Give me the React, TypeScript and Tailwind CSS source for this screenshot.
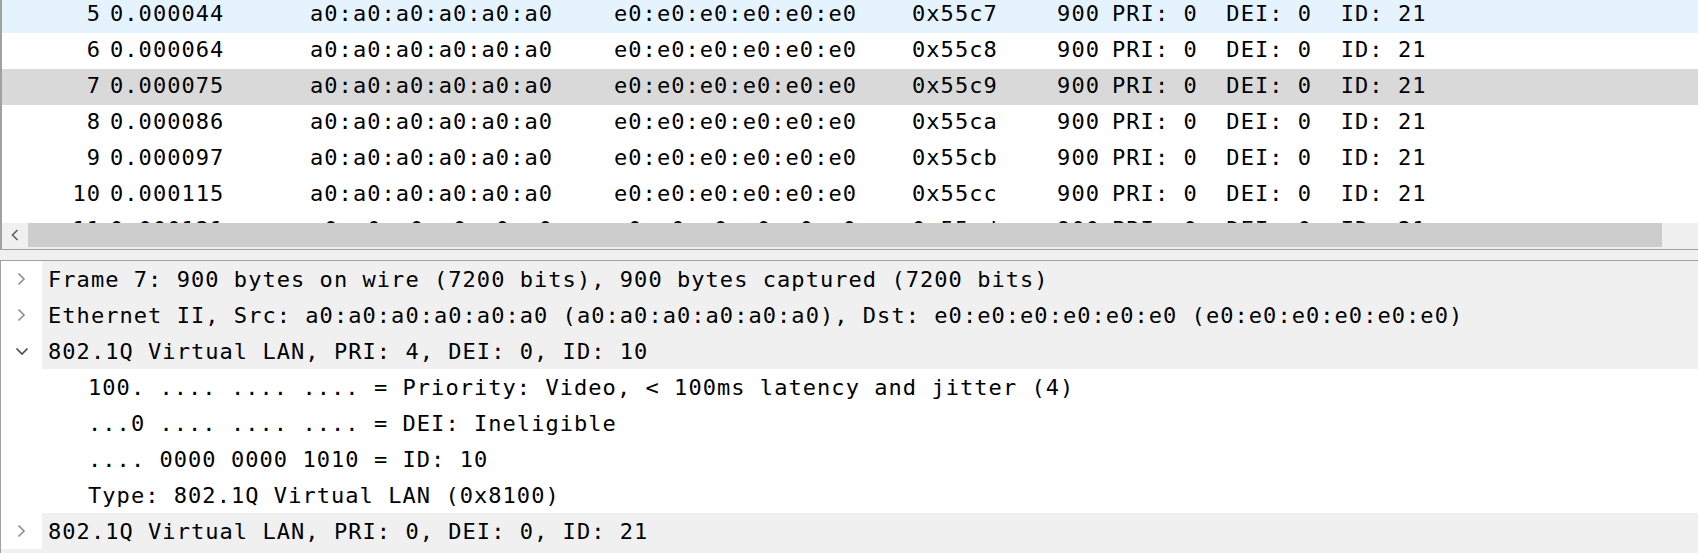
import type { ReactNode } from 'react';

type Packet = {
	no: number;
	time: string;
	type: string;
	highlight?: 'hover' | 'selected';
};

const packets: Packet[] = [
	{ no: 5, time: '0.000044', type: '0x55c7', highlight: 'hover' },
	{ no: 6, time: '0.000064', type: '0x55c8' },
	{ no: 7, time: '0.000075', type: '0x55c9', highlight: 'selected' },
	{ no: 8, time: '0.000086', type: '0x55ca' },
	{ no: 9, time: '0.000097', type: '0x55cb' },
	{ no: 10, time: '0.000115', type: '0x55cc' },
	{ no: 11, time: '0.000131', type: '0x55cd' },
];

const MONO = "font-['DejaVu_Sans_Mono',monospace] text-[22px] tracking-[1.05px] text-black";

function PacketRow({ packet }: { packet: Packet }) {
	const bg =
		packet.highlight === 'hover'
			? 'bg-[#e5f3ff]'
			: packet.highlight === 'selected'
				? 'bg-[#d9d9d9]'
				: 'bg-white';
	return (
		<div className={`flex h-[36px] items-center pb-[3px] whitespace-pre ${bg}`}>
			<span className="w-[99px] text-right">{packet.no}</span>
			<span className="ml-[9px] w-[200px]">{packet.time}</span>
			<span className="w-[304px]">a0:a0:a0:a0:a0:a0</span>
			<span className="w-[298px]">e0:e0:e0:e0:e0:e0</span>
			<span className="w-[144px]">{packet.type}</span>
			<span className="w-[44px] text-right">900</span>
			<span className="pl-[12px]">PRI: 0  DEI: 0  ID: 21</span>
		</div>
	);
}

function Collapsed() {
	return (
		<svg width="9" height="14" viewBox="0 0 9 14" fill="none">
			<polyline points="1.5,1.5 7,7 1.5,12.5" stroke="#8c8c8c" strokeWidth="1.6" />
		</svg>
	);
}

function Expanded() {
	return (
		<svg width="14" height="9" viewBox="0 0 14 9" fill="none">
			<polyline points="1.5,1.5 7,7 12.5,1.5" stroke="#4d4d4d" strokeWidth="1.7" />
		</svg>
	);
}

function TreeRow({
	icon,
	children,
	depth = 0,
}: {
	icon?: 'open' | 'closed';
	children: ReactNode;
	depth?: number;
}) {
	const top = depth === 0;
	return (
		<div className="flex h-[36px] items-stretch">
			<div className="flex w-[41px] shrink-0 items-center justify-center bg-white">
				{icon === 'open' ? <Expanded /> : icon === 'closed' ? <Collapsed /> : null}
			</div>
			<div
				className={`flex flex-1 items-center whitespace-pre ${
					top ? 'bg-[#f0f0f0] pl-[6px]' : 'bg-white pl-[46px]'
				}`}
			>
				{children}
			</div>
		</div>
	);
}

export default function App() {
	return (
		<div className={`flex h-[553px] w-[1698px] flex-col overflow-hidden bg-[#f0f0f0] ${MONO}`}>
			{/* packet list */}
			<div className="flex shrink-0 flex-col border-b border-l-2 border-[#a0a0a0]">
				<div className="h-[223px] overflow-hidden bg-white">
					<div className="-mt-[2.7px]">
						{packets.map((p) => (
							<PacketRow key={p.no} packet={p} />
						))}
					</div>
				</div>
				<div className="flex h-[26px] bg-[#f0f0f0]">
					<div className="flex h-[23.5px] w-[26px] items-center justify-center">
						<svg width="8" height="12" viewBox="0 0 8 12" fill="none">
							<polyline points="6.5,1 1.5,6 6.5,11" stroke="#606060" strokeWidth="1.6" />
						</svg>
					</div>
					<div className="h-[23.5px] w-[1634px] bg-[#cdcdcd]" />
					<div className="flex-1" />
				</div>
			</div>

			{/* splitter */}
			<div className="h-[10px] shrink-0 bg-[#f0f0f0]" />

			{/* packet details */}
			<div className="flex flex-1 flex-col overflow-hidden border-t border-l border-[#a0a0a0] bg-white">
				<TreeRow icon="closed">
					Frame 7: 900 bytes on wire (7200 bits), 900 bytes captured (7200 bits)
				</TreeRow>
				<TreeRow icon="closed">
					Ethernet II, Src: a0:a0:a0:a0:a0:a0 (a0:a0:a0:a0:a0:a0), Dst: e0:e0:e0:e0:e0:e0 (e0:e0:e0:e0:e0:e0)
				</TreeRow>
				<TreeRow icon="open">802.1Q Virtual LAN, PRI: 4, DEI: 0, ID: 10</TreeRow>
				<TreeRow depth={1}>100. .... .... .... = Priority: Video, &lt; 100ms latency and jitter (4)</TreeRow>
				<TreeRow depth={1}>...0 .... .... .... = DEI: Ineligible</TreeRow>
				<TreeRow depth={1}>.... 0000 0000 1010 = ID: 10</TreeRow>
				<TreeRow depth={1}>Type: 802.1Q Virtual LAN (0x8100)</TreeRow>
				<TreeRow icon="closed">802.1Q Virtual LAN, PRI: 0, DEI: 0, ID: 21</TreeRow>
				<div className="flex-1 bg-[#f0f0f0]" />
			</div>
		</div>
	);
}
